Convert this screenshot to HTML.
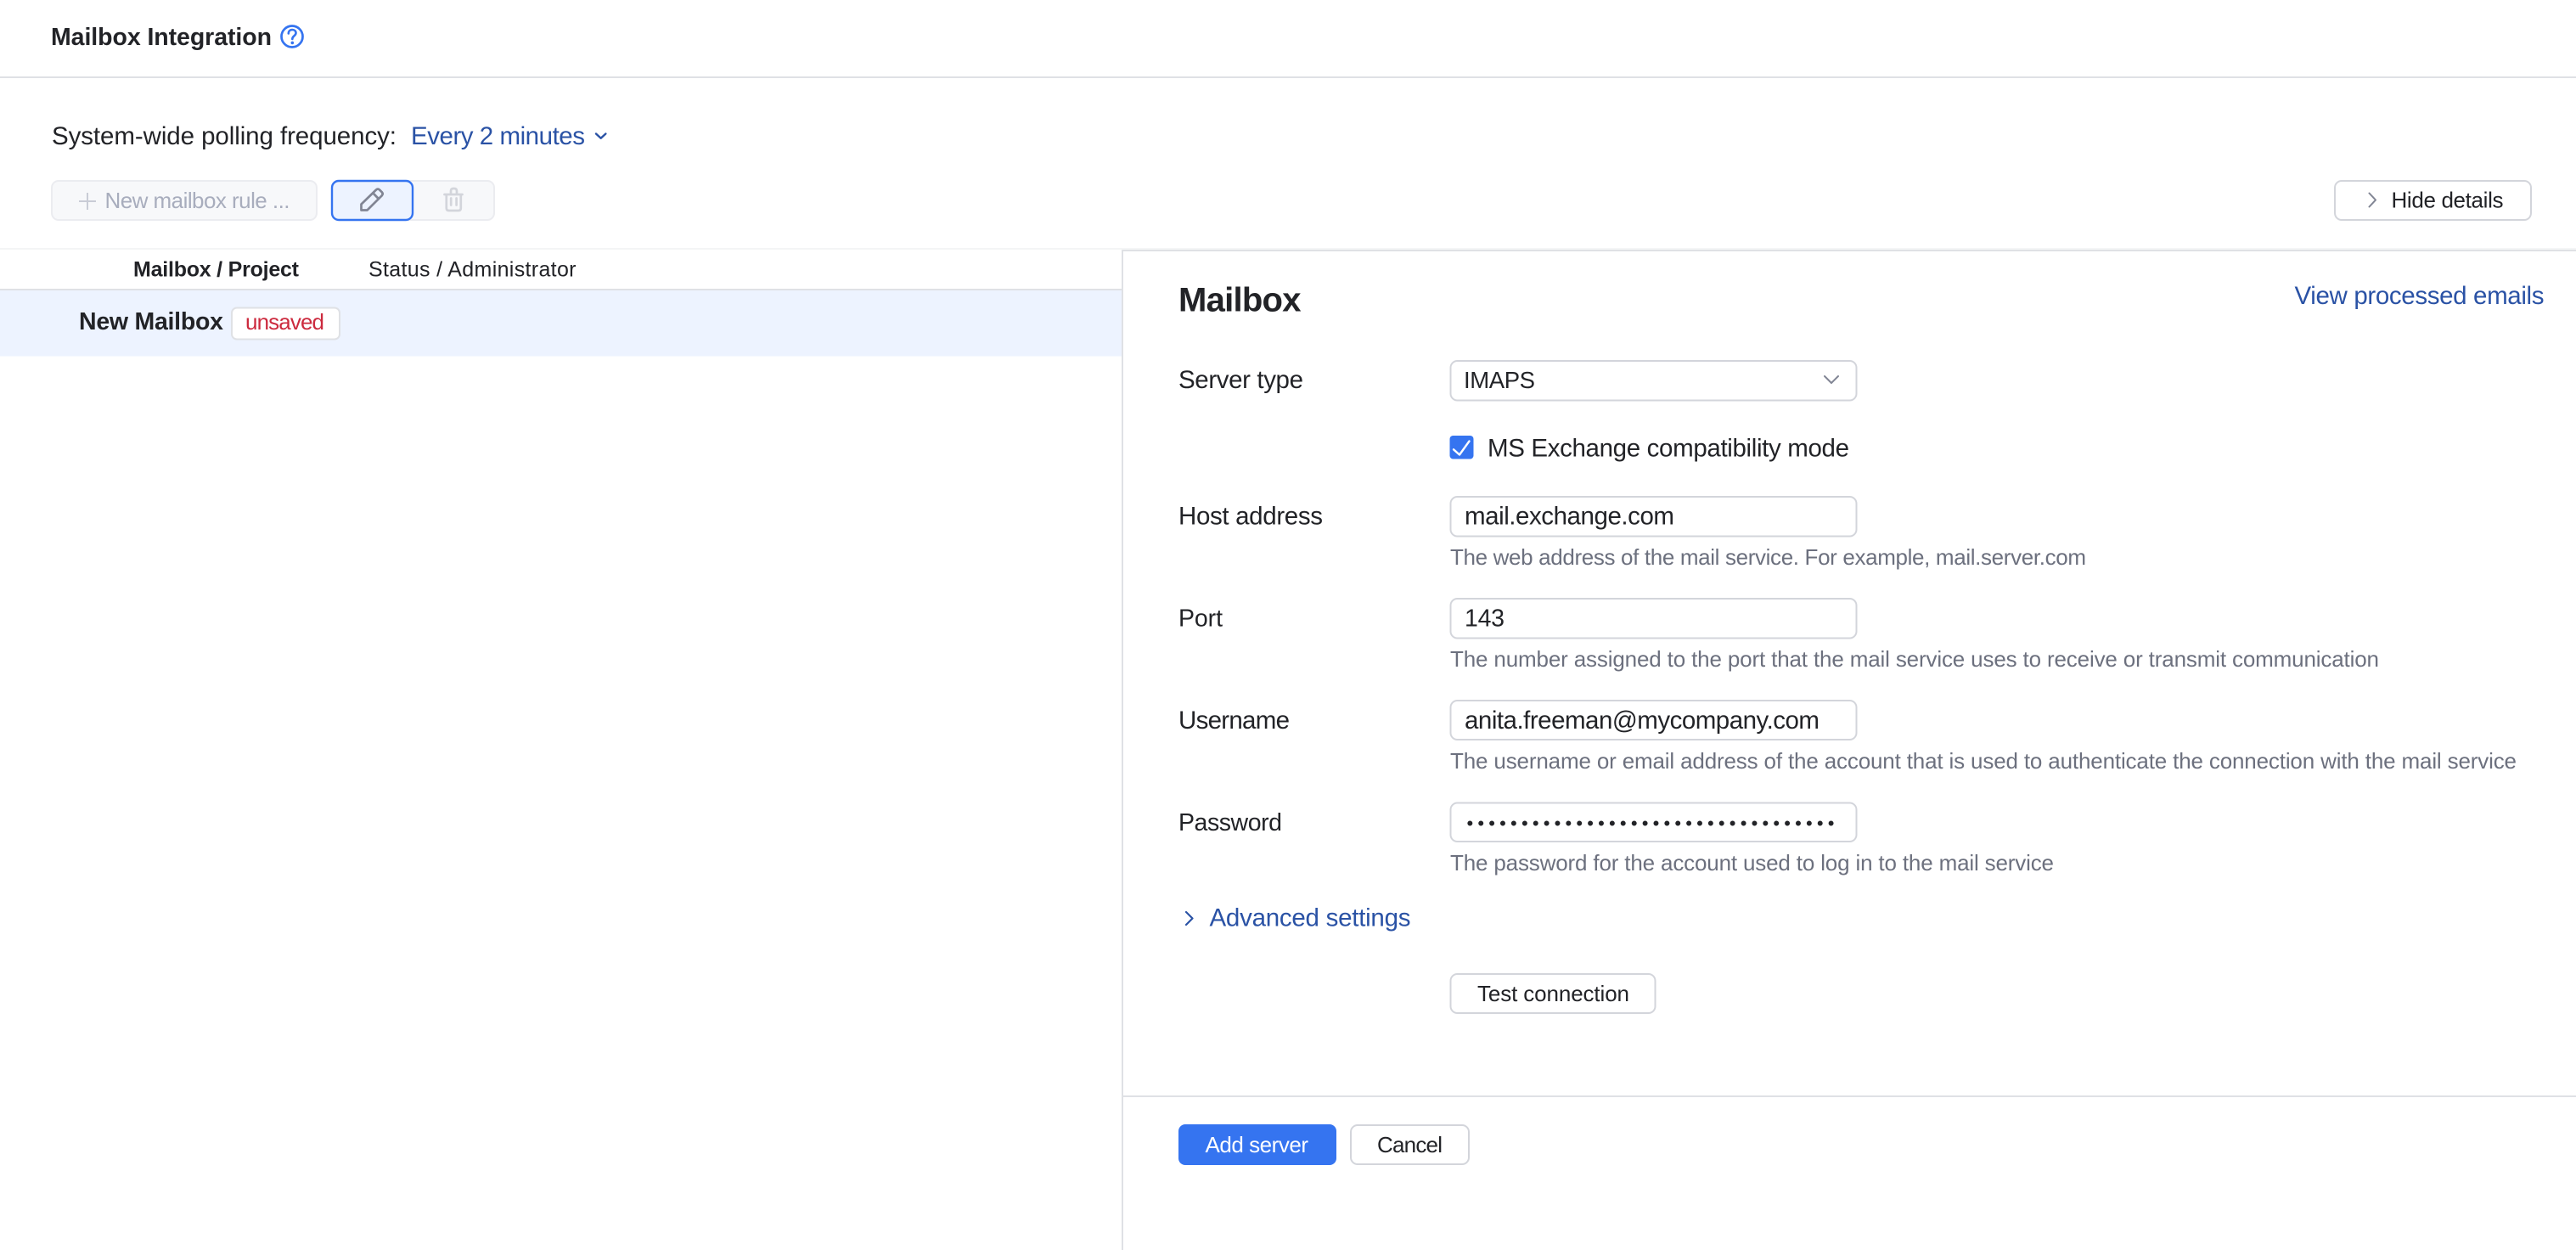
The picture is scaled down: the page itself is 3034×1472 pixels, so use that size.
<!DOCTYPE html>
<html lang="en"><head><meta charset="utf-8"><title>Mailbox Integration</title>
<style>
html,body{margin:0;padding:0;background:#fff;width:3034px;height:1472px;overflow:hidden}
svg{display:block}
text{font-family:"Liberation Sans",sans-serif;font-size:29.5px;fill:#222327}
.b{font-weight:700;font-size:28.5px}
.s{font-size:26px}
.h{font-size:26px;fill:#6c707e}
.l{fill:#2a52a5}
.box{fill:#fff;stroke:#d3d5db;stroke-width:2}
.ln{fill:none;stroke-linecap:round;stroke-linejoin:round}
</style></head><body>
<svg width="3034" height="1472" viewBox="0 0 3034 1472" xmlns="http://www.w3.org/2000/svg">
<!-- header -->
<text class="b" x="60" y="53" textLength="260">Mailbox Integration</text>
<circle cx="344" cy="43" r="12.500" fill="none" stroke="#3574f0" stroke-width="2.700"/>
<path class="ln" d="M339.800 39.400c0-2.700 1.900-4.400 4.400-4.400s4.300 1.600 4.300 3.900c0 3.400-4.200 3.400-4.200 7" stroke="#3574f0" stroke-width="2.600"/>
<circle cx="344.300" cy="50.400" r="1.800" fill="#3574f0"/>
<rect x="0" y="90" width="3034" height="2" fill="#dfe1e5"/>

<!-- polling -->
<text x="61" y="170" textLength="406">System-wide polling frequency:</text>
<text class="l" x="484" y="170" textLength="205">Every 2 minutes</text>
<path class="ln" d="M702 157.500l5.700 5.300 5.700-5.300" stroke="#2a52a5" stroke-width="2.400"/>

<!-- toolbar -->
<rect x="61" y="213" width="312" height="46" rx="8" fill="#f7f8fa" stroke="#ebecf0" stroke-width="2"/>
<path d="M103 227v20M93 237h20" stroke="#c9ccd6" stroke-width="2" fill="none"/>
<text class="s" style="fill:#a8adbd" x="123.500" y="245" textLength="218">New mailbox rule ...</text>
<rect x="470" y="213" width="112" height="46" rx="8" fill="#f7f8fa" stroke="#ebecf0" stroke-width="2"/>
<rect x="391" y="213" width="95" height="46" rx="8" fill="#edf3ff" stroke="#3574f0" stroke-width="2.400"/>
<path class="ln" d="M425.500 247.500v-7L443 223.500q2-1.700 4 0l2.800 2.800q1.700 2 0 4L432.500 247.500zM439.500 227.500l6.300 6.500" stroke="#818594" stroke-width="2.700"/>
<path class="ln" d="M523.500 229h21M531 229v-4c0-2 1-3 3-3h1c2 0 3 1 3 3v4M525.800 229v16c0 2 1 3 3 3h11c2 0 3-1 3-3v-16M531.200 233.500v8M537.600 233.500v8" stroke="#d3d5db" stroke-width="2.700"/>
<rect x="2750" y="213" width="231" height="46" rx="8" class="box"/>
<path class="ln" d="M2790.500 227.500l7.500 8-7.500 8" stroke="#818594" stroke-width="2"/>
<text class="s" x="2816.500" y="244.500" textLength="132">Hide details</text>

<!-- dividers -->
<rect x="0" y="292" width="3034" height="2" fill="#f4f5f6"/>
<rect x="1321" y="294" width="1713" height="2" fill="#dfe1e5"/>
<rect x="1321" y="294" width="2" height="1178" fill="#dfe1e5"/>
<rect x="1323" y="1290" width="1711" height="2" fill="#dfe1e5"/>

<!-- table -->
<text class="s b" style="font-size:25px" x="157" y="325.500" textLength="195">Mailbox / Project</text>
<text class="s" style="font-size:25px" x="434" y="325.500" textLength="244.500">Status / Administrator</text>
<rect x="0" y="340" width="1321" height="2" fill="#dfe1e5"/>
<rect x="0" y="342" width="1321" height="77.500" fill="#edf3ff"/>
<text class="b" x="93" y="388" textLength="170">New Mailbox</text>
<rect x="273" y="362.500" width="127" height="37" rx="6" fill="#fff" stroke="#dfe1e5" stroke-width="2"/>
<text class="s" style="fill:#cc2a3e" x="289" y="388" textLength="93">unsaved</text>

<!-- form -->
<text class="b" style="font-size:40px" x="1388" y="366.500" textLength="144.500">Mailbox</text>
<text class="l" x="2702.500" y="358" textLength="294">View processed emails</text>

<text x="1388" y="457" textLength="147">Server type</text>
<rect x="1708.500" y="425" width="478" height="46.500" rx="8" class="box"/>
<text style="font-size:27.500px" x="1724" y="457" textLength="84">IMAPS</text>
<path class="ln" d="M2149 443l8 8 8-8" stroke="#818594" stroke-width="2"/>

<rect x="1707.500" y="513" width="28" height="27.500" rx="4" fill="#3574f0"/>
<path class="ln" d="M1712 529.300l7 6.200 11.500-16" stroke="#fff" stroke-width="2.400"/>
<text x="1752" y="537.500" textLength="426">MS Exchange compatibility mode</text>

<text x="1388" y="617.500" textLength="170">Host address</text>
<rect x="1708.500" y="585" width="478" height="46.500" rx="8" class="box"/>
<text x="1725" y="617.500" textLength="247">mail.exchange.com</text>
<text class="h" x="1708" y="665" textLength="749">The web address of the mail service. For example, mail.server.com</text>

<text style="font-size:28.500px" x="1388" y="737.500" textLength="52">Port</text>
<rect x="1708.500" y="705" width="478" height="46.500" rx="8" class="box"/>
<text style="font-size:28.500px" x="1725" y="737.500" textLength="47">143</text>
<text class="h" x="1708" y="785" textLength="1094">The number assigned to the port that the mail service uses to receive or transmit communication</text>

<text x="1388" y="858" textLength="131">Username</text>
<rect x="1708.500" y="825" width="478" height="46" rx="8" class="box"/>
<text x="1725" y="858" textLength="418">anita.freeman@mycompany.com</text>
<text class="h" x="1708" y="905" textLength="1256">The username or email address of the account that is used to authenticate the connection with the mail service</text>

<text style="font-size:28.500px" x="1388" y="978" textLength="122">Password</text>
<rect x="1708.500" y="945.500" width="478" height="45.500" rx="8" class="box"/>
<text style="font-size:22px" x="1727.500" y="977" textLength="433">••••••••••••••••••••••••••••••••••</text>
<text class="h" x="1708" y="1025" textLength="711">The password for the account used to log in to the mail service</text>

<path class="ln" d="M1397 1074l7.500 7.500-7.500 7.500" stroke="#2a52a5" stroke-width="2.200"/>
<text class="l" x="1424.500" y="1090.500" textLength="237">Advanced settings</text>

<rect x="1708.500" y="1147" width="241" height="46" rx="8" class="box"/>
<text class="s" x="1740" y="1179" textLength="179">Test connection</text>

<rect x="1388" y="1324" width="186" height="48" rx="8" fill="#3574f0"/>
<text class="s" style="fill:#fff" x="1419.500" y="1357" textLength="121.500">Add server</text>
<rect x="1591" y="1325" width="139" height="46" rx="8" class="box"/>
<text class="s" x="1622" y="1357" textLength="77">Cancel</text>
</svg>
</body></html>
